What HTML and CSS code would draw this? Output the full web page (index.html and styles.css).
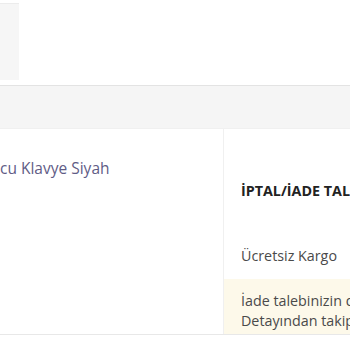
FILE: index.html
```html
<!DOCTYPE html>
<html lang="tr">
<head>
<meta charset="utf-8">
<link rel="stylesheet" href="styles.css">
</head>
<body>
<div class="page">
  <div class="top">
    <div class="thumb"></div>
  </div>
  <div class="band"></div>
  <div class="row">
    <div class="product">
      <div class="name">cu Klavye Siyah</div>
    </div>
    <div class="side">
      <div class="side-body">
        <div class="title">İPTAL/İADE TALEBİ</div>
        <div class="cargo">Ücretsiz Kargo</div>
      </div>
      <div class="notice">İade talebinizin durumunu Sipariş<br>Detayından takip edebilirsiniz.</div>
    </div>
  </div>
</div>
</body>
</html>
```
FILE: styles.css
```css
html, body {
  margin: 0;
  padding: 0;
  background: #fff;
  overflow: hidden;
}
.page {
  width: 350px;
  height: 350px;
  font-family: "Open Sans", "Noto Sans", sans-serif;
}
.top {
  height: 85px;
  padding-top: 3px;
  box-sizing: border-box;
}
.thumb {
  width: 19px;
  height: 77px;
  background: #f6f6f6;
  border-top: 1px solid #ececec;
  box-sizing: border-box;
}
.band {
  height: 44px;
  background: #f5f5f5;
  border-top: 1px solid #e3e3e3;
  border-bottom: 1px solid #f0f0f0;
  box-sizing: border-box;
}
.row {
  display: flex;
  height: 205px;
  border-bottom: 1px solid #e8e8e8;
  box-sizing: content-box;
}
.product {
  width: 223px;
  flex: none;
  padding-top: 29px;
  box-sizing: border-box;
}
.name {
  font-size: 15.5px;
  line-height: 20px;
  color: #5f5c86;
  white-space: nowrap;
}
.side {
  flex: none;
  width: 300px;
  border-left: 1px solid #f0f0f0;
  display: flex;
  flex-direction: column;
}
.side-body {
  flex: 1;
  padding: 53px 0 0 17px;
}
.title {
  font-size: 14.3px;
  font-weight: 700;
  color: #222;
  line-height: 18px;
  white-space: nowrap;
}
.cargo {
  margin-top: 47px;
  font-size: 14.3px;
  line-height: 18px;
  color: #4a4a4a;
  white-space: nowrap;
}
.notice {
  height: 55px;
  box-sizing: border-box;
  background: #fdf9ea;
  padding: 12px 0 0 17px;
  font-size: 14.3px;
  line-height: 20px;
  color: #4a4a4a;
  white-space: nowrap;
}
```
